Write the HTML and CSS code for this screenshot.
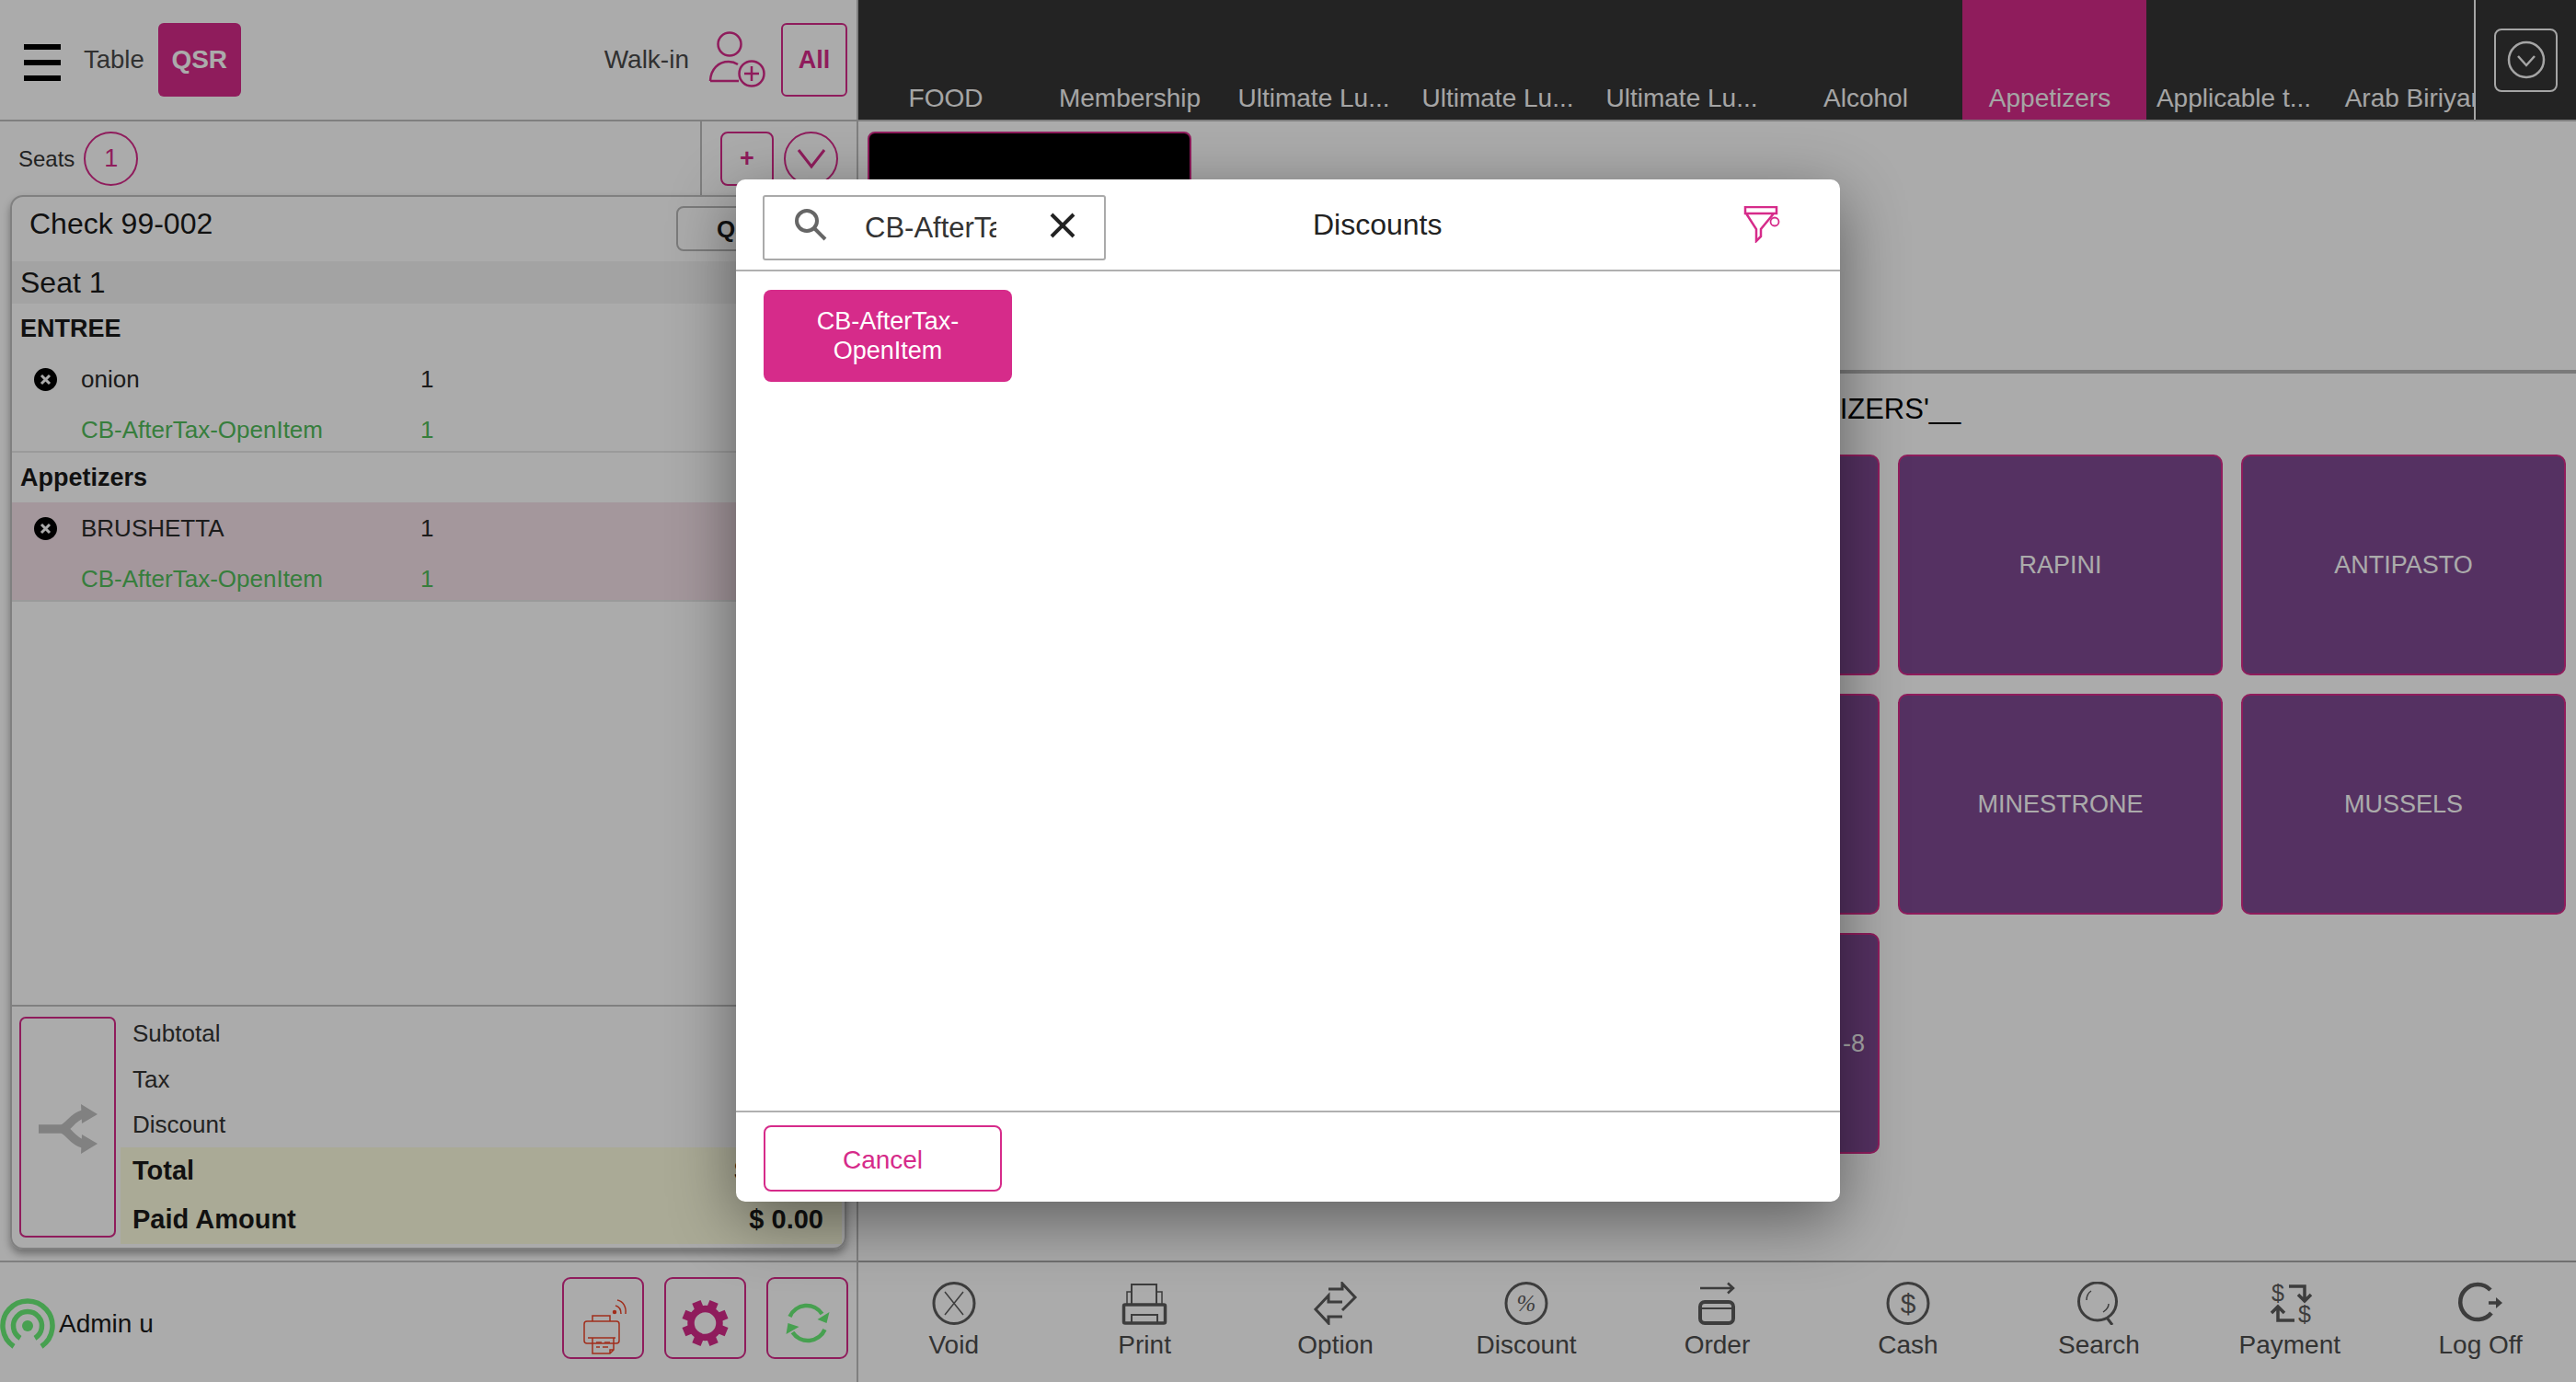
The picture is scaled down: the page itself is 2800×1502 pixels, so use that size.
FILE: index.html
```html
<!DOCTYPE html>
<html>
<head>
    <title>POS Discounts</title>
    <meta name="viewport" content="width=device-width, initial-scale=1">
    <link rel="stylesheet" href="styles.css">
</head>
<body>
<div class="app">
    <div class="order-panel">
        <div class="top-bar">
            <div class="hamburger"><span></span><span></span><span></span></div>
            <span class="top-label table-label">Table</span>
            <div class="qsr-btn">QSR</div>
            <span class="top-label walkin-label">Walk-in</span>
            <svg class="walkin-icon" width="62" height="62" viewBox="0 0 62 62" fill="none" stroke="#d62b8a" stroke-width="2.5">
                <circle cx="23" cy="14" r="12.5"/>
                <path d="M2 54C2.500 41 11 33 22 33C26 33 29 34 32 36M2 54H33"/>
                <circle cx="47" cy="46" r="13.500"/>
                <path d="M47 38V54M39 46H55"/>
            </svg>
            <div class="all-btn">All</div>
        </div>

        <div class="seats-bar">
            <span class="seats-label">Seats</span>
            <div class="circle-btn">1</div>
            <div class="seat-actions">
                <div class="plus-btn">+</div>
                <div class="circle-btn chevron-btn">
                    <svg width="36" height="26" viewBox="0 0 36 26" fill="none" stroke="#d62b8a" stroke-width="3"><path d="M4 4L18 22L32 4"/></svg>
                </div>
            </div>
        </div>

        <div class="check-card">
            <div class="check-head">
                <div class="check-title">Check 99-002</div>
                <div class="qsr-tag">QSR</div>
            </div>
            <div class="seat-band">Seat 1</div>
            <div class="check-items">
                <div class="course-name">ENTREE</div>
                <div class="item-group">
                    <div class="item-row">
                        <svg class="void-x" width="25" height="25" viewBox="0 0 25 25"><circle cx="12.500" cy="12.500" r="12.500" fill="#000"/><path d="M8 8L17 17M17 8L8 17" stroke="#fff" stroke-width="3"/></svg>
                        <span class="item-name">onion</span><span>1</span>
                    </div>
                    <div class="item-row sub-row"><span class="item-name">CB-AfterTax-OpenItem</span><span>1</span></div>
                </div>
                <div class="course-name">Appetizers</div>
                <div class="item-group selected">
                    <div class="item-row">
                        <svg class="void-x" width="25" height="25" viewBox="0 0 25 25"><circle cx="12.500" cy="12.500" r="12.500" fill="#000"/><path d="M8 8L17 17M17 8L8 17" stroke="#fff" stroke-width="3"/></svg>
                        <span class="item-name">BRUSHETTA</span><span>1</span>
                    </div>
                    <div class="item-row sub-row"><span class="item-name">CB-AfterTax-OpenItem</span><span>1</span></div>
                </div>
            </div>
            <div class="check-foot">
                <div class="split-btn">
                    <svg width="64" height="54" viewBox="0 0 64 54" fill="#c0c0c0">
                        <path d="M0 27H24C32 27 36 14 48 11M24 27C32 27 36 40 48 43" fill="none" stroke="#c0c0c0" stroke-width="9.500"/>
                        <path d="M46 0L64 11L47 21Z"/>
                        <path d="M46 54L64 43L47 33Z"/>
                    </svg>
                </div>
                <div class="summary">
                    <div class="sum-row">Subtotal</div>
                    <div class="sum-row">Tax</div>
                    <div class="sum-row">Discount</div>
                    <div class="total-band">
                        <div class="total-row"><span>Total</span><span>$ 10.00</span></div>
                        <div class="total-row"><span>Paid Amount</span><span>$ 0.00</span></div>
                    </div>
                </div>
            </div>
        </div>

        <div class="status-bar">
            <svg width="60" height="60" viewBox="0 0 60 60" fill="none" stroke="#6aef78" stroke-width="5.500">
                <path d="M15 52.400A27 27 0 1 1 45 52.400"/>
                <path d="M22 43.300A15.500 15.500 0 1 1 38 43.300"/>
                <circle cx="30" cy="30" r="6" fill="#6aef78" stroke="none"/>
            </svg>
            <span class="admin-name">Admin u</span>
            <div class="status-btn first">
                <svg width="85" height="85" viewBox="0 -2 85 85" fill="none" stroke="#f0452a" stroke-width="1.500">
                    <rect x="22" y="44" width="38" height="24" rx="3"/>
                    <path d="M31 44V38H50V44M26 62H56"/>
                    <path d="M31 62V79H50L54 75V62M50 79V75H54M35 67H41M44 67H50M35 72H39M42 72H48"/>
                    <circle cx="55" cy="34" r="1.500" fill="#f0452a"/>
                    <path d="M56 27C60 28 62 31 62 36M58 21C64 22 68 28 67 36"/>
                </svg>
            </div>
            <div class="status-btn">
                <svg width="85" height="85" viewBox="-42.500 -48 85 85" fill="#d62b8a">
                    <circle r="15.500" fill="none" stroke="#d62b8a" stroke-width="7.500"/>
                    <rect x="-5" y="-25" width="10" height="8" transform="rotate(22.500)"/>
                    <rect x="-5" y="-25" width="10" height="8" transform="rotate(67.500)"/>
                    <rect x="-5" y="-25" width="10" height="8" transform="rotate(112.500)"/>
                    <rect x="-5" y="-25" width="10" height="8" transform="rotate(157.500)"/>
                    <rect x="-5" y="-25" width="10" height="8" transform="rotate(202.500)"/>
                    <rect x="-5" y="-25" width="10" height="8" transform="rotate(247.500)"/>
                    <rect x="-5" y="-25" width="10" height="8" transform="rotate(292.500)"/>
                    <rect x="-5" y="-25" width="10" height="8" transform="rotate(337.500)"/>
                </svg>
            </div>
            <div class="status-btn">
                <svg width="85" height="85" viewBox="-42.500 -48 85 85" fill="#6aef78">
                    <path d="M-19 -7A20 20 0 0 1 16 -10M19 7A20 20 0 0 1 -16 10" fill="none" stroke="#6aef78" stroke-width="4.500"/>
                    <path d="M24 -12L21 0L11 -4Z"/>
                    <path d="M-23 12L-21 0L-9 4Z"/>
                </svg>
            </div>
        </div>
    </div>

    <div class="menu-panel">
        <div class="tab-bar">
            <div class="tabs">
                <div class="tab">FOOD</div>
                <div class="tab">Membership</div>
                <div class="tab">Ultimate Lu...</div>
                <div class="tab">Ultimate Lu...</div>
                <div class="tab">Ultimate Lu...</div>
                <div class="tab">Alcohol</div>
                <div class="tab active">Appetizers</div>
                <div class="tab">Applicable t...</div>
                <div class="tab">Arab Biriyani</div>
            </div>
            <div class="tab-more">
                <div class="more-btn">
                    <svg width="44" height="44" viewBox="0 0 44 44" fill="none" stroke="#f6f6f6" stroke-width="2.500">
                        <circle cx="22" cy="22" r="19"/>
                        <path d="M13 18L22 28L31 18"/>
                    </svg>
                </div>
            </div>
        </div>

        <div class="group-strip">
            <div class="group-tile"></div>
        </div>

        <div class="menu-items">
            <div class="menu-title">APPETIZERS'__</div>
            <div class="tile-grid">
                <div class="tile"></div>
                <div class="tile"></div>
                <div class="tile"></div>
                <div class="tile">RAPINI</div>
                <div class="tile">ANTIPASTO</div>
                <div class="tile"></div>
                <div class="tile"></div>
                <div class="tile"></div>
                <div class="tile">MINESTRONE</div>
                <div class="tile">MUSSELS</div>
                <div class="tile"></div>
                <div class="tile"></div>
                <div class="tile tile-end">-8</div>
            </div>
        </div>

        <div class="tool-bar">
            <div class="tool">
                <svg width="50" height="47" viewBox="0 0 50 47" fill="none" stroke="#5b5b5b" stroke-width="3">
                    <circle cx="25" cy="23.500" r="22"/>
                    <path d="M15 11L35 36M35 11L15 36" stroke-width="1.500"/>
                </svg>
                <span>Void</span>
            </div>
            <div class="tool">
                <svg width="50" height="47" viewBox="0 0 50 47" fill="none" stroke="#5b5b5b" stroke-width="2.500">
                    <rect x="2.500" y="25" width="45" height="20" rx="1.500" stroke-width="3.500"/>
                    <path d="M11 25V3H38V25" stroke-width="2"/>
                    <path d="M6 25V11H11M44 25V11H38" stroke-width="1.500"/>
                    <rect x="11" y="36" width="28" height="9" stroke-width="2"/>
                </svg>
                <span>Print</span>
            </div>
            <div class="tool">
                <svg width="50" height="47" viewBox="0 0 50 47" fill="none" stroke="#5b5b5b" stroke-width="3">
                    <path d="M17 8H32V2L46 17L32 31M32 22H17V15L3 30L17 45V38H32"/>
                </svg>
                <span>Option</span>
            </div>
            <div class="tool">
                <svg width="50" height="47" viewBox="0 0 50 47" fill="none" stroke="#5b5b5b" stroke-width="3">
                    <circle cx="25" cy="23.500" r="22"/>
                    <text class="percent-glyph" x="25" y="32" text-anchor="middle">%</text>
                </svg>
                <span>Discount</span>
            </div>
            <div class="tool">
                <svg width="50" height="47" viewBox="0 0 50 47" fill="none" stroke="#5b5b5b" stroke-width="2.500">
                    <path d="M7 7H43M37 1.500L43 7L37 12.500"/>
                    <rect x="7" y="22" width="36" height="23" rx="5" stroke-width="4"/>
                    <path d="M7 29H43" stroke-width="2"/>
                </svg>
                <span>Order</span>
            </div>
            <div class="tool">
                <svg width="50" height="47" viewBox="0 0 50 47" fill="none" stroke="#5b5b5b" stroke-width="3">
                    <circle cx="25" cy="23.500" r="22"/>
                    <text class="dollar-glyph" x="25" y="34" text-anchor="middle">$</text>
                </svg>
                <span>Cash</span>
            </div>
            <div class="tool">
                <svg width="50" height="47" viewBox="0 0 50 47" fill="none" stroke="#5b5b5b" stroke-width="3">
                    <circle cx="24" cy="21.500" r="20.500"/>
                    <path d="M34 39L40 47" stroke-width="3"/>
                    <path d="M12 20C12 15 14 12 17 10M36 24C36 28 33 31 30 33" stroke-width="1.500"/>
                </svg>
                <span>Search</span>
            </div>
            <div class="tool">
                <svg width="54" height="47" viewBox="0 0 54 47" fill="none" stroke="#5b5b5b" stroke-width="3.500">
                    <text class="pay-glyph" x="14" y="21" text-anchor="middle">$</text>
                    <text class="pay-glyph" x="43" y="44" text-anchor="middle">$</text>
                    <path d="M26 5H43V20M36 14L43 21L50 14"/>
                    <path d="M14 27V42H32M7 34L14 27L21 34"/>
                </svg>
                <span>Payment</span>
            </div>
            <div class="tool">
                <svg width="50" height="47" viewBox="0 0 50 47" fill="#5b5b5b" stroke="#5b5b5b" stroke-width="4.500">
                    <path d="M36 9A19 19 0 1 0 37 34" fill="none"/>
                    <path d="M34 23H42" stroke-width="3.500"/>
                    <path d="M42 17L49 23L42 29Z" stroke="none"/>
                </svg>
                <span>Log Off</span>
            </div>
        </div>
    </div>
</div>

<div class="overlay">
    <div class="modal">
        <div class="modal-head">
            <div class="search-box">
                <svg class="search-icon" width="36" height="36" viewBox="0 0 36 36" fill="none" stroke="#666" stroke-width="4">
                    <circle cx="14" cy="14" r="11"/>
                    <path d="M22 22L34 34"/>
                </svg>
                <div class="search-text">CB-AfterTax-OpenItem</div>
                <svg class="search-clear" width="28" height="28" viewBox="0 0 28 28" fill="none" stroke="#222" stroke-width="4">
                    <path d="M2 2L26 26M26 2L2 26"/>
                </svg>
            </div>
            <div class="modal-title">Discounts</div>
            <svg class="filter-icon" width="40" height="40" viewBox="0 0 40 40" fill="none" stroke="#d62b8a" stroke-width="2.500">
                <path d="M2 1H36V8H2ZM3 8L14 25V38L19 33V25L33 8"/>
                <circle cx="34" cy="17" r="4.500" stroke-width="1.800"/>
            </svg>
        </div>
        <div class="modal-body">
            <div class="discount-btn">CB-AfterTax-<br>OpenItem</div>
        </div>
        <div class="modal-foot">
            <div class="cancel-btn">Cancel</div>
        </div>
    </div>
</div>
</body>
</html>
```

FILE: styles.css
```css
* {
    box-sizing: border-box;
}
body {
    margin: 0;
    height: 1502px;
    overflow: hidden;
    position: relative;
    background: #fff;
    color: #1a1a1a;
    font-family: "Liberation Sans", Arial, sans-serif;
}
.app {
    display: flex;
    height: 100%;
}

/* left side */
.order-panel {
    width: 933px;
    flex-shrink: 0;
    display: flex;
    flex-direction: column;
    border-right: 2px solid #bebebe;
}
.top-bar {
    height: 132px;
    flex-shrink: 0;
    display: flex;
    align-items: center;
    padding: 0 10px 0 26px;
    border-bottom: 2px solid #bebebe;
}
.hamburger {
    width: 40px;
    margin-top: 6px;
    display: flex;
    flex-direction: column;
    gap: 11px;
}
.hamburger span {
    height: 6px;
    background: #000;
}
.top-label {
    font-size: 27.500px;
    color: #4a4a4a;
}
.table-label {
    margin-left: 25px;
}
.qsr-btn {
    width: 90px;
    height: 80px;
    margin-left: 15px;
    border-radius: 6px;
    background: #d62b8a;
    color: #fff;
    font-size: 28px;
    font-weight: bold;
    display: flex;
    align-items: center;
    justify-content: center;
}
.walkin-label {
    margin-left: auto;
    font-size: 28px;
}
.walkin-icon {
    margin-left: 21px;
}
.all-btn {
    width: 72px;
    height: 80px;
    margin-left: 17px;
    border: 2px solid #d62b8a;
    border-radius: 6px;
    color: #d62b8a;
    font-size: 27px;
    font-weight: bold;
    display: flex;
    align-items: center;
    justify-content: center;
}
.seats-bar {
    height: 80px;
    flex-shrink: 0;
    display: flex;
    align-items: center;
    padding-left: 20px;
}
.seats-label {
    font-size: 24px;
    color: #333;
    margin-right: 10px;
    margin-top: 2px;
}
.circle-btn {
    width: 59px;
    height: 59px;
    border: 2px solid #d62b8a;
    border-radius: 50%;
    color: #d62b8a;
    font-size: 27px;
    display: flex;
    align-items: center;
    justify-content: center;
}
.seat-actions {
    margin-left: auto;
    align-self: stretch;
    display: flex;
    align-items: center;
    gap: 11px;
    padding-left: 20px;
    padding-right: 20px;
    border-left: 2px solid #bebebe;
}
.plus-btn {
    width: 58px;
    height: 59px;
    border: 2px solid #d62b8a;
    border-radius: 8px;
    color: #d62b8a;
    font-size: 27px;
    font-weight: bold;
    display: flex;
    align-items: center;
    justify-content: center;
}

/* check */
.check-card {
    flex: 1;
    margin: 0 11px 12px;
    width: 909px;
    display: flex;
    flex-direction: column;
    border: 2px solid #bfbfbf;
    border-radius: 14px;
    box-shadow: 0 5px 9px rgba(0, 0, 0, 0.35);
}
.check-head {
    height: 70px;
    flex-shrink: 0;
    display: flex;
    justify-content: space-between;
    align-items: flex-start;
    padding: 10px 20px 0 19px;
}
.check-title {
    font-size: 32px;
    line-height: 36px;
    margin-top: 1px;
}
.qsr-tag {
    width: 163px;
    height: 49px;
    padding-left: 42px;
    border: 2px solid #b8b8b8;
    border-radius: 8px;
    font-size: 26px;
    font-weight: bold;
    line-height: 46px;
}
.seat-band {
    height: 46px;
    flex-shrink: 0;
    padding-left: 9px;
    background: #f3f3f3;
    font-size: 32px;
    line-height: 46px;
}
.check-items {
    flex: 1;
}
.course-name {
    height: 54px;
    padding-left: 9px;
    font-size: 27px;
    font-weight: bold;
    line-height: 55px;
}
.item-group {
    border-bottom: 2px solid #e6e6e6;
}
.item-group.selected {
    background: #f5e2e9;
}
.item-row {
    height: 56px;
    display: flex;
    align-items: center;
    padding-left: 75px;
    font-size: 26px;
    color: #2a2a2a;
    position: relative;
}
.void-x {
    position: absolute;
    left: 24px;
    top: 16px;
}
.item-name {
    width: 369px;
}
.sub-row {
    height: 50px;
    padding-top: 5px;
    color: #52bc5b;
}

/* totals */
.check-foot {
    height: 264px;
    flex-shrink: 0;
    display: flex;
    padding: 11px 3px 4px 8px;
    border-top: 2px solid #bfbfbf;
    position: relative;
}
.split-btn {
    width: 105px;
    height: 240px;
    flex-shrink: 0;
    padding-top: 4px;
    border: 2px solid #d62b8a;
    border-radius: 7px;
    display: flex;
    align-items: center;
    justify-content: center;
}
.summary {
    flex: 1;
    margin-left: 5px;
    margin-top: -7px;
    display: flex;
    flex-direction: column;
}
.sum-row {
    height: 49.500px;
    padding-left: 13px;
    font-size: 26px;
    line-height: 51px;
    color: #333;
}
.total-band {
    flex: 1;
    background: #fefee0;
    padding: 0 20px 0 13px;
    font-size: 29px;
    font-weight: bold;
}
.total-row {
    height: 52.500px;
    display: flex;
    justify-content: space-between;
    align-items: center;
}

/* status */
.status-bar {
    height: 132px;
    flex-shrink: 0;
    display: flex;
    align-items: center;
    padding-right: 9px;
    border-top: 2px solid #bebebe;
}
.status-bar > svg {
    margin-top: 8px;
}
.admin-name {
    font-size: 28px;
    margin-left: 4px;
    margin-top: 4px;
}
.status-btn {
    width: 89px;
    height: 89px;
    align-self: flex-start;
    margin: 16px 0 0 22px;
    border: 2px solid #d62b8a;
    border-radius: 9px;
    display: flex;
    align-items: center;
    justify-content: center;
}
.status-btn.first {
    margin-left: auto;
}

/* right side */
.menu-panel {
    flex: 1;
    min-width: 0;
    display: flex;
    flex-direction: column;
}
.tab-bar {
    height: 132px;
    flex-shrink: 0;
    display: flex;
    background: #353535;
    border-bottom: 2px solid #bebebe;
}
.tabs {
    width: 1758px;
    display: flex;
    overflow: hidden;
    border-right: 2px solid #f6f6f6;
}
.tab {
    width: 200px;
    flex-shrink: 0;
    padding: 91px 10px 0 0;
    font-size: 28px;
    line-height: 32px;
    text-align: center;
    white-space: nowrap;
    color: #f6f6f6;
}
.tab.active {
    background: #d62b8a;
}
.tab-more {
    flex: 1;
    display: flex;
    align-items: center;
    justify-content: center;
}
.more-btn {
    width: 69px;
    height: 69px;
    border: 2px solid #f6f6f6;
    border-radius: 8px;
    display: flex;
    align-items: center;
    justify-content: center;
}
.group-strip {
    height: 274px;
    flex-shrink: 0;
    padding: 11px 0 0 10px;
    border-bottom: 4px solid #b6b6b6;
}
.group-tile {
    width: 352px;
    height: 200px;
    background: #000;
    border: 2px solid #d62b8a;
    border-radius: 8px;
}
.menu-items {
    flex: 1;
    padding-left: 11px;
}
.menu-title {
    height: 88px;
    padding: 23px 0 0 954px;
    font-size: 31px;
    line-height: 32px;
    color: #000;
}
.tile-grid {
    display: grid;
    grid-template-columns: repeat(5, 353px);
    grid-auto-rows: 240px;
    gap: 20px;
}
.tile {
    background: #7f4a93;
    border: 2px solid #d62b8a;
    border-radius: 10px;
    color: #fff;
    font-size: 27px;
    display: flex;
    align-items: center;
    justify-content: center;
}
.tile-end {
    justify-content: flex-end;
    padding-right: 14px;
}
.tool-bar {
    height: 132px;
    flex-shrink: 0;
    display: flex;
    border-top: 2px solid #a8a8a8;
}
.tool {
    flex: 1;
    display: flex;
    flex-direction: column;
    align-items: center;
    padding-top: 21px;
    font-size: 28px;
    line-height: 32px;
    color: #4c4c4c;
}
.tool span {
    margin-top: 6px;
}
.percent-glyph {
    font-family: "Liberation Serif", serif;
    font-style: italic;
    font-size: 25px;
    fill: #5b5b5b;
    stroke: none;
}
.dollar-glyph {
    font-size: 30px;
    fill: #5b5b5b;
    stroke: none;
}
.pay-glyph {
    font-size: 25px;
    fill: #5b5b5b;
    stroke: none;
}

/* discounts dialog */
.overlay {
    position: absolute;
    inset: 0;
    background: rgba(0, 0, 0, 0.33);
    display: flex;
    align-items: center;
    justify-content: center;
}
.modal {
    width: 1200px;
    height: 1111px;
    margin-bottom: 1px;
    background: #fff;
    border-radius: 10px;
    display: flex;
    flex-direction: column;
    box-shadow: 0 20px 70px rgba(0, 0, 0, 0.45);
}
.modal-head {
    height: 100px;
    flex-shrink: 0;
    display: flex;
    align-items: flex-start;
    padding: 17px 65px 0 29px;
    border-bottom: 2px solid #b0b0b0;
}
.search-box {
    width: 373px;
    height: 71px;
    flex-shrink: 0;
    border: 2px solid #aaa;
    border-radius: 3px;
    display: flex;
    align-items: center;
}
.search-icon {
    margin-left: 32px;
    margin-top: -8px;
}
.search-text {
    width: 143px;
    margin-left: 41px;
    overflow: hidden;
    white-space: nowrap;
    font-size: 31px;
    color: #333;
}
.search-clear {
    margin-left: 58px;
    margin-top: -6px;
}
.modal-title {
    margin-left: 225px;
    font-size: 32px;
    line-height: 36px;
    margin-top: 14px;
    color: #222;
}
.filter-icon {
    margin-left: auto;
    margin-top: 12px;
}
.modal-body {
    flex: 1;
    padding: 20px 30px;
}
.discount-btn {
    width: 270px;
    height: 100px;
    border-radius: 8px;
    background: #d62b8a;
    color: #fff;
    font-size: 27px;
    line-height: 32px;
    text-align: center;
    display: flex;
    align-items: center;
    justify-content: center;
}
.modal-foot {
    height: 99px;
    flex-shrink: 0;
    padding: 14px 0 0 30px;
    border-top: 2px solid #b0b0b0;
}
.cancel-btn {
    width: 259px;
    height: 72px;
    border: 2px solid #d62b8a;
    border-radius: 8px;
    color: #d62b8a;
    font-size: 28px;
    line-height: 72px;
    text-align: center;
}
```
